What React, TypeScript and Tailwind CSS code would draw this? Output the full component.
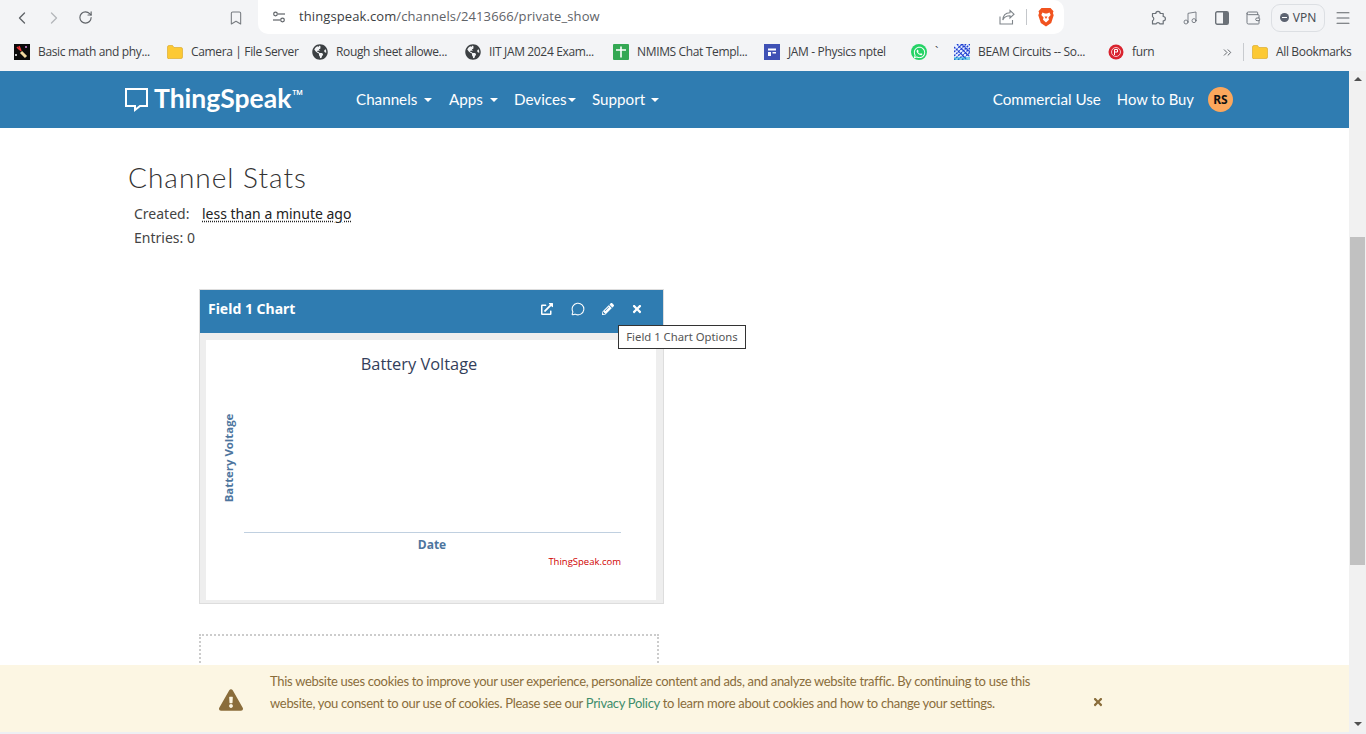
import React from "react";
import { ChevronLeft, ChevronRight, RotateCw, Bookmark, Music, Wallet, Menu, ChevronsRight, MessageCircle } from "lucide-react";
import { FaPencilAlt, FaTimes, FaExclamationTriangle, FaGlobeAmericas, FaWhatsapp, FaExternalLinkAlt } from "react-icons/fa";

const FolderIcon = () => (
  <svg width="16" height="14" viewBox="0 0 16 14"><path d="M0.5 2a1.5 1.5 0 0 1 1.5-1.5h3.5l1.5 2h7a1.5 1.5 0 0 1 1.5 1.5v8a1.5 1.5 0 0 1-1.5 1.5h-11A1.5 1.5 0 0 1 .5 12z" fill="#fcc934" stroke="#d9a520" strokeWidth="0.6" /></svg>
);

const Mark = ({ kind }: { kind: string }) => {
  if (kind === "math") return (
    <svg width="16" height="16" viewBox="0 0 16 16"><rect width="16" height="16" fill="#0b0b0b" /><path d="M3 3l3 3M5 2l2 5" stroke="#e33" strokeWidth="1.5" /><path d="M7 8l5 5" stroke="#f2d9a0" strokeWidth="3" /><circle cx="2" cy="11" r="1" fill="#fff" /><circle cx="12" cy="3" r="1" fill="#d8d" /></svg>
  );
  if (kind === "folder") return <FolderIcon />;
  if (kind === "globe") return <FaGlobeAmericas className="text-[16px] text-[#3c4043]" />;
  if (kind === "nmims") return (
    <svg width="16" height="16" viewBox="0 0 16 16"><rect width="16" height="16" rx="1" fill="#34a853" /><path d="M3 6h10M8 2.500v11" stroke="#fff" strokeWidth="1.6" /></svg>
  );
  if (kind === "jam") return (
    <svg width="16" height="16" viewBox="0 0 16 16"><rect width="16" height="16" fill="#3f51b5" /><path d="M4 4.500h8v2H4zM4 8h3v4H4zM8.500 8H12v1.500H8.500z" fill="#fff" /></svg>
  );
  if (kind === "wa") return (
    <span className="flex h-[16px] w-[16px] items-center justify-center rounded-full bg-[#25d366]"><FaWhatsapp className="text-[13px] text-white" /></span>
  );
  if (kind === "beam") return (
    <svg width="16" height="16" viewBox="0 0 16 16"><rect width="16" height="16" fill="#e8f0ff" /><path d="M0 16L16 0M4 16L16 4M8 16l8-8M0 12L12 0M0 8l8-8M0 3l8 8 5 5M3 0l13 13M8 0l8 8" stroke="#1f3fd0" strokeWidth="1.4" strokeDasharray="2 1" /><rect y="13" width="16" height="3" fill="#10b0d0" opacity="0.5" /></svg>
  );
  return (
    <svg width="16" height="16" viewBox="0 0 16 16"><circle cx="8" cy="8" r="7.500" fill="#d9232e" /><circle cx="8" cy="8" r="4.500" fill="none" stroke="#f7c6c8" strokeWidth="1" /><path d="M6.500 11V5.500h3v2.500h-3" fill="none" stroke="#fff" strokeWidth="1" /></svg>
  );
};

const bookmarks = [
  { kind: "math", label: "Basic math and phy...", w: "w-[153px]" },
  { kind: "folder", label: "Camera | File Server", w: "w-[145px]" },
  { kind: "globe", label: "Rough sheet allowe...", w: "w-[153px]" },
  { kind: "globe", label: "IIT JAM 2024 Exam...", w: "w-[148px]" },
  { kind: "nmims", label: "NMIMS Chat Templ...", w: "w-[151px]" },
  { kind: "jam", label: "JAM - Physics nptel", w: "w-[147px]" },
  { kind: "wa", label: "`", w: "w-[43px]" },
  { kind: "beam", label: "BEAM Circuits -- So...", w: "w-[154px]" },
  { kind: "furn", label: "furn", w: "w-[100px]" },
];

const navLeft = [
  { label: "Channels", w: "w-[93px]", gap: "ml-[7px]" },
  { label: "Apps", w: "w-[65px]", gap: "ml-[7px]" },
  { label: "Devices", w: "w-[78px]", gap: "ml-[1px]" },
  { label: "Support", w: "w-[80px]", gap: "ml-[6px]" },
];

export default function App() {
  return (
    <div className="relative flex h-[734px] w-[1366px] flex-col overflow-hidden bg-white font-['Noto_Sans',sans-serif]">
      {/* Browser toolbar */}
      <div className="flex h-[35px] shrink-0 items-center bg-[#f3f4f6] text-[#5f6368]">
        <ChevronLeft size={20} strokeWidth={1.6} className="ml-[12px]" />
        <ChevronRight size={20} strokeWidth={1.6} className="ml-[12px] text-[#b4b7bb]" />
        <RotateCw size={15} strokeWidth={1.8} className="ml-[14px]" />
        <Bookmark size={16} strokeWidth={1.6} className="ml-[135px] text-[#777b80]" />
        <div className="ml-[14px] flex h-[34px] w-[806px] items-center self-start rounded-b-[10px] rounded-tr-[10px] bg-white">
          <svg width="16" height="16" viewBox="0 0 16 16" className="ml-[13px]" fill="none" stroke="#5f6368" strokeWidth="1.2"><circle cx="4.500" cy="5" r="1.800" /><path d="M7 5h7" /><circle cx="11.500" cy="11" r="1.800" /><path d="M2 11h7" /></svg>
          <span className="ml-[12px] whitespace-nowrap font-['Open_Sans',sans-serif] text-[13px] tracking-[0.1px] text-[#3c4043]">
            thingspeak.com<span className="text-[#5f6368]">/channels/2413666/private_show</span>
          </span>
          <svg width="16" height="16" viewBox="0 0 16 16" className="ml-auto" fill="none" stroke="#80868b" strokeWidth="1.100"><path d="M11 1.500l4 3.700-4 3.700V6.700C7.500 6.700 5 8 3.800 11 4 7 6.500 3.900 11 3.700zM1 7.500v7.500h12.500v-4" /></svg>
          <span className="ml-[11px] h-[16px] w-px bg-[#c4c7cb]" />
          <svg width="18" height="20" viewBox="0 0 18 20" className="ml-[10px] mr-[9px]"><path d="M4.500 1h9l3 3.200-.6 1.800.8 2.200-2.500 7.800L9 19.500 3.800 16 1.300 8.200 2.100 6l-.6-1.800z" fill="#f1531f" /><path d="M5.500 5.500l2.500 1h2l2.500-1 1.200 2.600-2.300 2.400.6 2.300L9 15.500l-3-2.700.6-2.300-2.300-2.400z" fill="#fff" /><path d="M7.500 9.500h3L9 12z" fill="#f1531f" /></svg>
        </div>
        <svg width="16" height="16" viewBox="0 0 16 16" className="ml-[86px]" fill="none" stroke="#6b7178" strokeWidth="1.200" strokeLinejoin="round"><path d="M5.800 3.500a2.200 2.200 0 0 1 4.400 0h3v3a2.200 2.200 0 0 1 0 4.400v3h-3.200a2.200 2.200 0 0 0-4 0H2.500v-3.200a2.200 2.200 0 0 0 0-4V3.500z" /></svg>
        <Music size={16} strokeWidth={1.3} className="ml-[16px] text-[#6b7178]" />
        <svg width="14" height="14" viewBox="0 0 14 14" className="ml-[17px]"><rect x="0.700" y="0.700" width="12.600" height="12.600" rx="1.500" fill="none" stroke="#6b7178" strokeWidth="1.400" /><rect x="8" y="1" width="5" height="12" fill="#6b7178" /></svg>
        <Wallet size={16} strokeWidth={1.4} className="ml-[16px] text-[#6b7178]" />
        <div className="ml-[10px] flex h-[28px] w-[54px] items-center justify-center gap-[4px] rounded-[9px] border border-[#dcdfe3] text-[12px] text-[#4b5056]">
          <span className="flex h-[9px] w-[9px] items-center justify-center rounded-full bg-[#5b6270]"><span className="h-px w-[5px] bg-white" /></span>
          VPN
        </div>
        <Menu size={18} strokeWidth={1.4} className="ml-[9px]" />
      </div>

      {/* Bookmarks */}
      <div className="flex h-[36px] shrink-0 items-center bg-[#f3f4f6] pb-[2px] pl-[14px] font-['Open_Sans',sans-serif] text-[12px] tracking-[-0.35px] text-[#3c4043]">
        {bookmarks.map((b, i) => (
          <div key={i} className={`flex items-center gap-[8px] whitespace-nowrap ${b.w}`}>
            <span className="flex w-[16px] justify-center"><Mark kind={b.kind} /></span>
            <span>{b.label}</span>
          </div>
        ))}
        <ChevronsRight size={13} strokeWidth={1.8} className="ml-[13px] text-[#5f6368]" />
        <span className="ml-[9px] h-[18px] w-px bg-[#c8cbcf]" />
        <span className="ml-[8px] flex items-center gap-[8px] whitespace-nowrap"><FolderIcon />All Bookmarks</span>
      </div>

      {/* Page and scrollbar */}
      <div className="flex min-h-0 flex-1">
        <div className="min-w-0 flex-1 overflow-hidden">
          <header className="flex h-[57px] items-center bg-[#2f7cb1] text-white">
            <div className="ml-[124px] flex w-[232px] items-center">
              <svg width="25" height="26" viewBox="0 0 25 26" fill="none" stroke="#fff" strokeWidth="2"><path d="M2 2h21v17h-7l-5 4v-4H2z" /></svg>
              <span className="mb-[2px] ml-[5px] font-['Lato',sans-serif] text-[26.500px] font-bold leading-none">ThingSpeak</span>
              <span className="mb-[9px] ml-[1px] text-[14px] font-semibold leading-none">™</span>
            </div>
            <nav className="flex items-center font-['Lato',sans-serif]">
              {navLeft.map((n) => (
                <div key={n.label} className={`flex items-center text-[15.200px] ${n.w}`}>
                  {n.label}
                  <span className={`${n.gap} mt-[1px] h-0 w-0 border-x-[4px] border-t-[4px] border-x-transparent border-t-white`} />
                </div>
              ))}
            </nav>
            <span className="ml-auto font-['Lato',sans-serif] text-[15.200px]">Commercial Use</span>
            <span className="ml-[16px] font-['Lato',sans-serif] text-[14.800px]">How to Buy</span>
            <span className="ml-[14px] mr-[116px] flex h-[25px] w-[25px] items-center justify-center rounded-full bg-[#fca75c] text-[12px] font-bold text-[#111]">RS</span>
          </header>

          <main className="pl-[128px]">
            <h2 className="pt-[31px] font-['Lato',sans-serif] text-[28px] font-light leading-[36px] tracking-[1px] text-[#333]">Channel Stats</h2>
            <div className="mt-[7px] pl-[6px] text-[14px] leading-[24px] text-[#444]">
              <div className="flex">
                <span className="w-[68px]">Created:</span>
                <span className="text-[#222] underline decoration-dotted decoration-[#222] underline-offset-[2px]">less than a minute ago</span>
              </div>
              <div>Entries: 0</div>
            </div>

            <section className="ml-[71px] mt-[39px] w-[465px] border border-[#ddd] bg-[#eee]">
              <div className="flex h-[43px] items-center bg-[#2f7cb1] pb-[6px] pl-[8px] text-white">
                <span className="text-[14px] font-bold">Field 1 Chart</span>
                <FaExternalLinkAlt size={12} className="ml-[246px]" />
                <MessageCircle size={14} strokeWidth={1.800} className="ml-[18px]" />
                <FaPencilAlt size={12} className="ml-[17px]" />
                <FaTimes size={12} className="ml-[17px]" />
              </div>
              <div className="mb-[3px] ml-[6px] mt-[7px] h-[260px] w-[450px] bg-white">
                <svg width="450" height="260" viewBox="0 0 450 260" fontFamily="'Open Sans', sans-serif">
                  <text x="213" y="30" textAnchor="middle" fontSize="16.400" fill="#333e5a">Battery Voltage</text>
                  <text transform="translate(27 118) rotate(-90)" textAnchor="middle" fontSize="11.400" fontWeight="700" fill="#4d759e">Battery Voltage</text>
                  <line x1="38" y1="192.500" x2="415" y2="192.500" stroke="#c0d0e0" />
                  <text x="226" y="209" textAnchor="middle" fontSize="12" fontWeight="700" fill="#4d759e">Date</text>
                  <text x="415" y="225" textAnchor="end" fontSize="9.500" fill="#d00000">ThingSpeak.com</text>
                </svg>
              </div>
            </section>

            <div className="ml-[71px] mt-[30px] h-[120px] w-[460px] border-2 border-dotted border-[#ccc]" />
          </main>
        </div>

        {/* Scrollbar */}
        <div className="flex w-[17px] shrink-0 flex-col items-center bg-[#f1f1f1]">
          <span className="mt-[6px] h-0 w-0 border-x-[4px] border-b-[4px] border-x-transparent border-b-[#505050]" />
          <span className="mt-[156px] h-[328px] w-[15px] bg-[#c1c1c1]" />
          <span className="mb-[6px] mt-auto h-0 w-0 border-x-[4px] border-t-[4px] border-x-transparent border-t-[#505050]" />
        </div>
      </div>
      <div className="h-[2px] shrink-0 bg-[#eef0f3]" />

      {/* Cookie banner */}
      <div className="absolute bottom-[2px] left-0 flex h-[67px] w-[1349px] items-center bg-[#fcf6e3] text-[#8a6d3b]">
        <FaExclamationTriangle size={24} className="ml-[219px] mt-[2px]" />
        <p className="mb-[13px] ml-[27px] w-[790px] whitespace-nowrap font-['Lato',sans-serif] text-[13px] leading-[22px] tracking-[-0.3px]">
          This website uses cookies to improve your user experience, personalize content and ads, and analyze website traffic. By continuing to use this<br />website, you consent to our use of cookies. Please see our <span className="text-[#3c8d6b]">Privacy Policy</span> to learn more about cookies and how to change your settings.
        </p>
        <FaTimes size={12} className="ml-[32px] mt-[6px]" />
      </div>

      {/* Tooltip */}
      <div className="absolute left-[618px] top-[325px] flex h-[24px] w-[128px] items-center justify-center whitespace-nowrap border border-[#333] bg-white text-[11.300px] text-[#555]">Field 1 Chart Options</div>
    </div>
  );
}
